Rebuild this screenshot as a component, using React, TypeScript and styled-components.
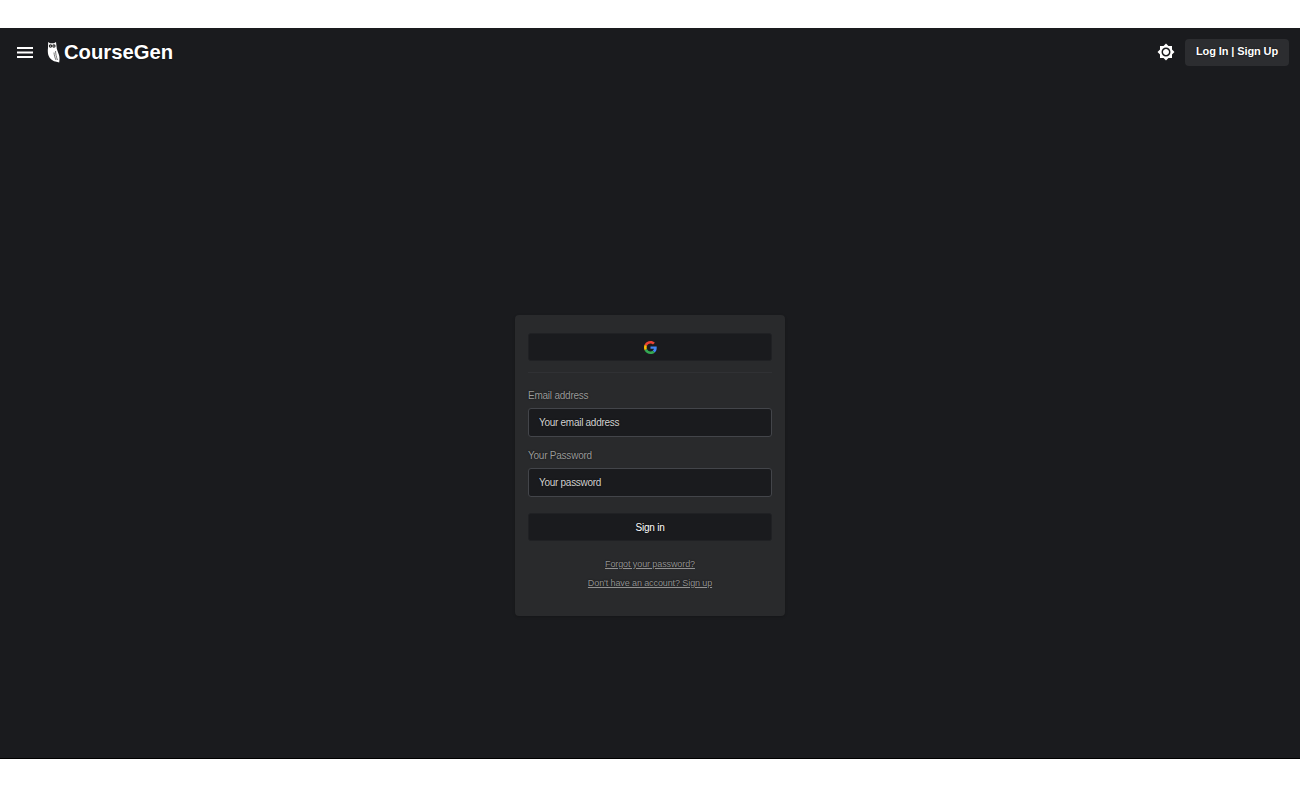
import React from "react";
import styled, { createGlobalStyle } from "styled-components";

const Global = createGlobalStyle`
  html, body { margin: 0; padding: 0; background: #fff; }
  body { font-family: "Liberation Sans", Arial, sans-serif; text-shadow: 0 0 1.5px rgba(0, 0, 0, 0.9); }
  * { box-sizing: border-box; }
`;

const Page = styled.div`
  margin-top: 28px;
  height: 731px;
  background: #1a1b1e;
  border-bottom: 1px solid #000;
  display: flex;
  flex-direction: column;
`;

const Header = styled.header`
  height: 48px;
  padding: 0 11px 0 17px;
  display: flex;
  align-items: center;
  justify-content: space-between;
`;

const Side = styled.div`
  display: flex;
  align-items: center;
`;

const Brand = styled.div`
  display: flex;
  align-items: center;
  margin-left: 14px;
  color: #fff;
  font-size: 20.25px;
  font-weight: 700;
`;

const LoginButton = styled.button`
  margin-left: 10px;
  height: 27px;
  width: 104px;
  padding: 0 0 2px;
  border: 0;
  border-radius: 4px;
  background: #2c2d30;
  color: #fff;
  text-shadow: inherit;
  font: 700 11px "Liberation Sans", Arial, sans-serif;
  letter-spacing: -0.1px;
`;

const Main = styled.main`
  flex: 1;
  display: flex;
  justify-content: center;
  padding-top: 239px;
`;

const Card = styled.section`
  width: 270px;
  height: 301px;
  padding: 18px 13px 0;
  background: #292a2c;
  border-radius: 4px;
  box-shadow: 0 1px 3px rgba(0, 0, 0, 0.2);
`;

const DarkButton = styled.button`
  display: flex;
  align-items: center;
  justify-content: center;
  width: 100%;
  height: 28px;
  padding: 0;
  border: 1px solid #202124;
  border-radius: 3px;
  background: #1a1b1e;
  color: #fff;
  text-shadow: inherit;
  font: 10px "Liberation Sans", Arial, sans-serif;
  letter-spacing: -0.2px;
`;

const Divider = styled.div`
  height: 1px;
  margin: 11px 0 17px;
  background: #303134;
`;

const Label = styled.label`
  display: block;
  height: 12px;
  margin-bottom: 6px;
  color: #9a9a9a;
  font-size: 10px;
  letter-spacing: -0.23px;
  line-height: 12px;
`;

const Field = styled.div<{ $gap: number }>`
  height: 29px;
  margin-bottom: ${(p) => p.$gap}px;
  padding: 0 10px 1px;
  display: flex;
  align-items: center;
  background: #1a1b1e;
  border: 1px solid #43454a;
  border-radius: 3px;
  color: #d2d2d2;
  font-size: 10px;
  letter-spacing: -0.28px;
`;

const Links = styled.div`
  margin-top: 18px;
  display: flex;
  flex-direction: column;
  align-items: center;
  gap: 8px;
`;

const TextLink = styled.a`
  color: #929292;
  font-size: 9px;
  letter-spacing: -0.1px;
  line-height: 11px;
  text-decoration: underline;
`;

const Menu = () => (
  <svg width="16" height="12" viewBox="0 0 16 12" fill="#fff" aria-hidden>
    <rect y="1" width="16" height="2" />
    <rect y="5.500" width="16" height="2" />
    <rect y="10" width="16" height="2" />
  </svg>
);

const Owl = () => (
  <svg width="13" height="21" viewBox="0 0 13 21" aria-hidden style={{ marginRight: 4 }}>
    <path
      fill="#fff"
      d="M1.200 0l1.800 1.300h4L9 0l.6 5c0 1 .2 2 .6 3l1.800 5c.6 2 .7 4.500.2 7.500l-1.800-.6-2-.4C5 19 1.500 15.500 1 11.500 .7 9 .8 7.500 1 6z"
    />
    <circle cx="3.500" cy="4" r="1.700" fill="#222" />
    <circle cx="6.900" cy="4" r="1.700" fill="#222" />
    <circle cx="3.500" cy="4" r=".6" fill="#fff" />
    <circle cx="6.900" cy="4" r=".6" fill="#fff" />
    <path fill="none" stroke="#555" strokeWidth=".8" d="M8.500 9c.3 3 .6 5.500 2 9M7 10.500c.2 2.500.8 5 2 7.500" />
  </svg>
);

const Sun = () => (
  <svg width="18" height="18" viewBox="0 0 24 24" fill="#fff" aria-hidden>
    <path d="M20 8.690V4h-4.690L12 .69 8.690 4H4v4.690L.69 12 4 15.310V20h4.690L12 23.310 15.310 20H20v-4.690L23.310 12 20 8.690zM12 18c-3.310 0-6-2.690-6-6s2.690-6 6-6 6 2.690 6 6-2.690 6-6 6zm0-10c-2.210 0-4 1.790-4 4s1.790 4 4 4 4-1.790 4-4-1.790-4-4-4z" />
  </svg>
);

const Google = () => (
  <svg width="13" height="13" viewBox="0 0 48 48" aria-hidden>
    <path fill="#EA4335" d="M24 9.500c3.540 0 6.710 1.220 9.210 3.600l6.850-6.850C35.900 2.380 30.470 0 24 0 14.620 0 6.510 5.380 2.560 13.220l7.980 6.190C12.430 13.720 17.740 9.500 24 9.500z" />
    <path fill="#4285F4" d="M46.980 24.550c0-1.570-.15-3.090-.38-4.550H24v9.020h12.940c-.58 2.960-2.260 5.480-4.780 7.180l7.730 6c4.510-4.180 7.090-10.360 7.090-17.650z" />
    <path fill="#FBBC05" d="M10.530 28.590c-.48-1.450-.76-2.990-.76-4.590s.27-3.140.76-4.590l-7.980-6.190C.92 16.460 0 20.120 0 24c0 3.880.92 7.540 2.560 10.780l7.970-6.190z" />
    <path fill="#34A853" d="M24 48c6.480 0 11.930-2.130 15.890-5.810l-7.730-6c-2.150 1.450-4.920 2.300-8.160 2.300-6.260 0-11.570-4.220-13.470-9.910l-7.980 6.190C6.510 42.620 14.620 48 24 48z" />
  </svg>
);

export default function App() {
  return (
    <>
      <Global />
      <Page>
        <Header>
          <Side>
            <Menu />
            <Brand>
              <Owl />
              CourseGen
            </Brand>
          </Side>
          <Side>
            <Sun />
            <LoginButton>Log In | Sign Up</LoginButton>
          </Side>
        </Header>
        <Main>
          <Card>
            <DarkButton aria-label="Sign in with Google">
              <Google />
            </DarkButton>
            <Divider />
            <Label>Email address</Label>
            <Field $gap={13}>Your email address</Field>
            <Label>Your Password</Label>
            <Field $gap={16}>Your password</Field>
            <DarkButton>Sign in</DarkButton>
            <Links>
              <TextLink>Forgot your password?</TextLink>
              <TextLink>Don't have an account? Sign up</TextLink>
            </Links>
          </Card>
        </Main>
      </Page>
    </>
  );
}
